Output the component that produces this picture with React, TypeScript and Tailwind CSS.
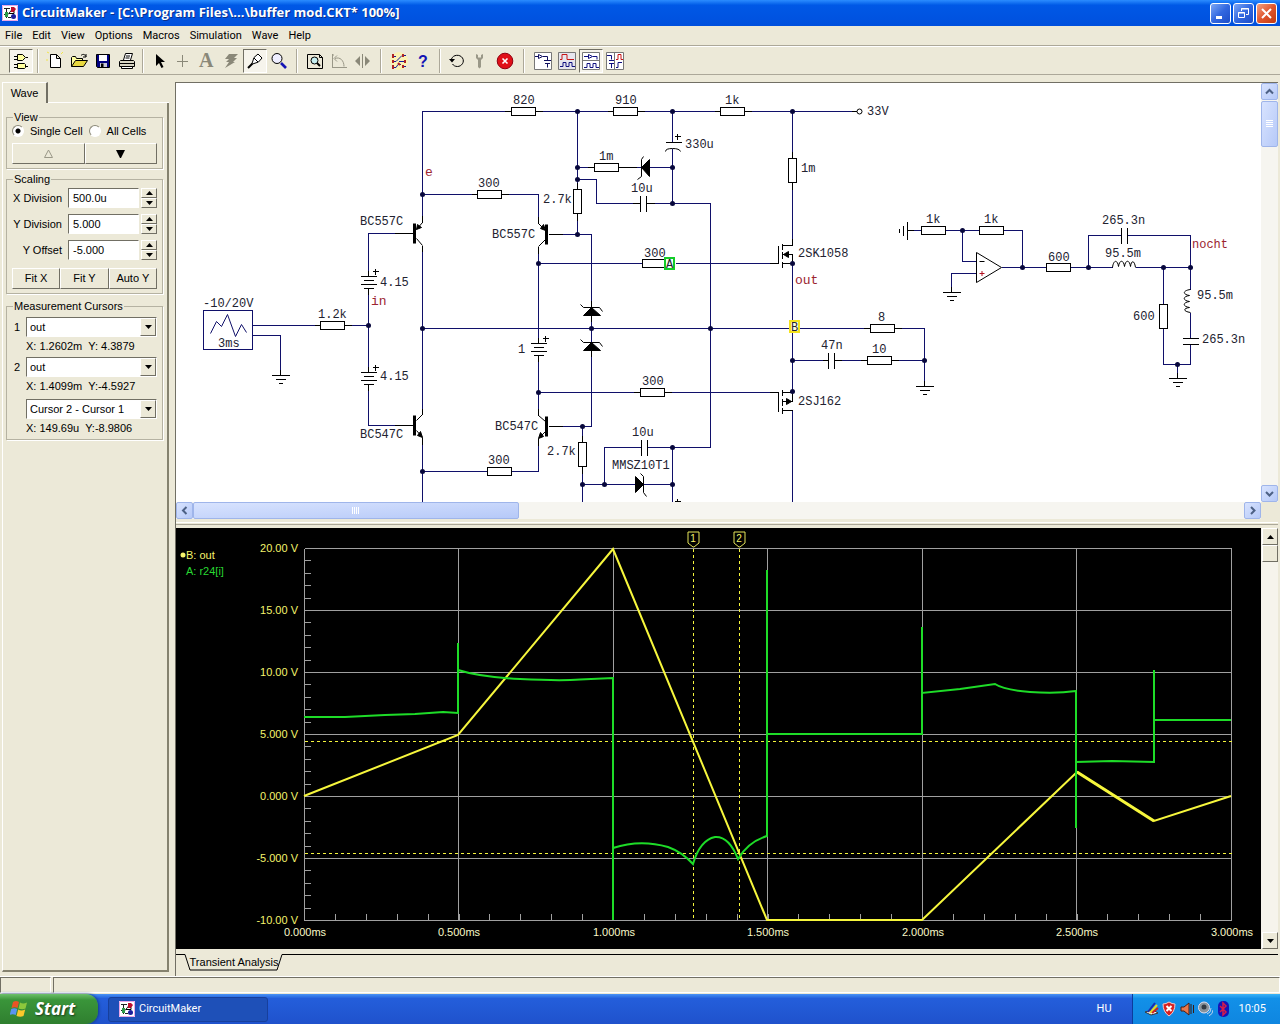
import React, { useState } from 'react';
import clsx from 'clsx';

const RAISED = 'border border-t-white border-l-white border-r-[#716f64] border-b-[#716f64] bg-[#ece9d8]';
const SUNKEN = 'border border-t-[#716f64] border-l-[#716f64] border-r-white border-b-white';

/* ---------- title bar ---------- */

const AppIcon = () => (
  <svg width="16" height="16" viewBox="0 0 16 16" className="shrink-0" aria-hidden="true">
    <rect width="16" height="16" fill="#fff" />
    <path d="M.5.5h15v15H.5z" fill="none" stroke="#e9a6e6" />
    <path d="M2 3.500h6M4.500 3v10M2 9.500h4l4-5M6 12.500h3" fill="none" stroke="#222" />
    <path d="M9 2h3l2 2-2 3H9z" fill="#c01030" />
    <path d="M3 7h3v5H3z" fill="#2c9c48" />
    <circle cx="11.500" cy="11.500" r="2.500" fill="#1b1f9c" />
    <path d="M7 8.500h5v-2" stroke="#000" fill="none" />
  </svg>
);

const WindowButton: React.FC<{ label: string; close?: boolean; children: React.ReactNode }> = ({ label, close, children }) => (
  <button
    aria-label={label}
    className={clsx(
      'flex h-[21px] w-[21px] items-center justify-center rounded-[3px] border border-white',
      close
        ? 'bg-linear-to-br from-[#f0a080] via-[#e0552d] to-[#c23a10]'
        : 'bg-linear-to-br from-[#7ea6f4] via-[#3268e0] to-[#1c4cc8]'
    )}
  >
    <svg width="15" height="15" viewBox="0 0 15 15" fill="none" stroke="#fff">{children}</svg>
  </button>
);

const TitleBar = () => (
  <header className="flex h-[26px] shrink-0 items-center bg-linear-to-b from-[#2b8cff] via-[#0058e6] via-20% to-[#0050dd] pr-[3px] pl-0.5">
    <AppIcon />
    <h1 className="ml-1 flex-1 truncate font-['Open_Sans','Noto_Sans',sans-serif] text-[13px] font-bold whitespace-pre text-white [text-shadow:1px_1px_#0a2f8c]">
      {'CircuitMaker - [C:\\Program Files\\...\\buffer mod.CKT* 100%]'}
    </h1>
    <div className="flex gap-0.5">
      <WindowButton label="Minimize"><path d="M3 11.500h6" strokeWidth="3" /></WindowButton>
      <WindowButton label="Restore">
        <path d="M5.500 5V2.500h7v6H10M5 3h8" />
        <path d="M2.500 6.500h6v5h-6zM2 7h7" />
      </WindowButton>
      <WindowButton label="Close" close><path d="M3 3l9 9M12 3l-9 9" strokeWidth="2" /></WindowButton>
    </div>
  </header>
);

const MENUS = ['File', 'Edit', 'View', 'Options', 'Macros', 'Simulation', 'Wave', 'Help'];

const MenuBar = () => (
  <nav className="flex h-5 shrink-0 items-center gap-2.5 border-b border-[#aca899] pl-[5px] font-[Roboto,sans-serif] text-[11px] text-black">
    {MENUS.map((m) => (
      <button key={m} className="leading-4">{m}</button>
    ))}
  </nav>
);

/* ---------- toolbar ---------- */

interface ToolProps {
  label: string;
  pressed?: boolean;
  children: React.ReactNode;
}

const Tool: React.FC<ToolProps> = ({ label, pressed, children }) => (
  <button
    aria-label={label}
    title={label}
    className={clsx('flex h-6 w-6 items-center justify-center', pressed && SUNKEN, pressed && 'bg-[#f6f4ec]')}
  >
    <svg width="20" height="20" viewBox="0 0 20 20" fill="none" stroke="#000" className="shrink-0 overflow-visible">{children}</svg>
  </button>
);

const Divider: React.FC<{ className?: string }> = ({ className = 'mx-1' }) => (
  <div className={clsx('h-6 w-0.5 border-r border-l border-r-white border-l-[#aca899]', className)} />
);

const Toolbar = () => (
  <div className="flex h-[29px] shrink-0 items-center border-t border-b border-t-white border-b-[#aca899] pl-[9px]">
    <Tool label="Parts" pressed>
      <path d="M6.500 3.500h5l3 3-3 3h-5zM3 5.500h3M3 8.500h3M15 6.500h2" fill="#ffffa0" />
      <path d="M6.500 12.500h7l1 1v3l-1 1h-7zM3 13.500h3M3 16.500h3M15 15.500h2" fill="#ffffa0" />
    </Tool>
    <Divider />
    <Tool label="New"><path d="M5.500 3.500h6l4 4v9h-10zM11.500 3.500v4h4" fill="#fff" /><path d="M4 2l-2-1M16 3l2-2M3 9H1" stroke="#f2e64a" /></Tool>
    <Tool label="Open">
      <path d="M2.500 15.500v-9l1-1h3l1 2h6v2" fill="#ffffa0" />
      <path d="M2.500 15.500l4-6h12l-4 6z" fill="#e8d840" />
      <path d="M12 4.500c2-2 4-1 5 1M17 3v3h-3" />
    </Tool>
    <Tool label="Save">
      <path d="M3.500 3.500h13v13h-12l-1-1z" fill="#000080" />
      <path d="M6 4h8v6H6z" fill="#fff" stroke="none" />
      <path d="M7 12h7v4H7z" fill="#c8c8d8" stroke="none" />
      <path d="M8 12.500h2.500V16H8z" fill="#000" stroke="none" />
    </Tool>
    <Tool label="Print">
      <path d="M6.500 9l2-6.500h7l-2 6.500" fill="#fff" />
      <path d="M9 5h4M8.500 7h4" />
      <path d="M3.500 9.500h13l1 1v5h-15v-5zM3 12.500h14" fill="#d8d5c4" />
      <path d="M4.500 15.500h11v2h-11z" fill="#fff" />
    </Tool>
    <Divider className="mx-[3px]" />
    <Tool label="Select"><path d="M7 3v12l3-3 2.500 5 2-1-2.500-5h4z" fill="#000" stroke="none" /></Tool>
    <Tool label="Wire"><path d="M9.500 4v12M4 10.500h11" stroke="#8a8878" /></Tool>
    <Tool label="Text">
      <text x="2" y="16" fill="#8a8878" stroke="none" fontFamily="Liberation Serif, serif" fontSize="20" fontWeight="bold">A</text>
    </Tool>
    <Tool label="Delete"><path d="M8 3h9l-4 4h3l-4 4h2L4 17l4-6H5l3-3H4z" fill="#8a8878" stroke="none" /></Tool>
    <Tool label="Probe" pressed>
      <path d="M7 12.500l2-6 4-3.500 4 4-3.500 4-6 2z" fill="#fff" />
      <path d="M3 17l4.500-4.500" strokeWidth="2" />
      <path d="M9 7l4 4" />
    </Tool>
    <Tool label="Zoom">
      <circle cx="8" cy="7.500" r="5" fill="#eef" />
      <path d="M12 12l5 5" stroke="#1414b4" strokeWidth="2.600" />
    </Tool>
    <Divider className="mx-[5px]" />
    <Tool label="Fit">
      <path d="M2.500 3.500h12l3 3v11h-15zM14.500 3.500v3h3" />
      <circle cx="9.500" cy="9.500" r="3.500" fill="#c6eef0" />
      <path d="M12 12l3 3" strokeWidth="2" />
    </Tool>
    <Tool label="Rotate">
      <path d="M3.500 3v13.500H18M6 7.500c5-2 9 2 9 8M8 4.500l-3 3 3 3" stroke="#9a9888" />
      <path d="M3 4h3M3 16.500h14" stroke="#9a9888" strokeDasharray="2 1" />
    </Tool>
    <Tool label="Mirror">
      <path d="M9.500 3v14" stroke="#8a8878" />
      <path d="M7 5v10l-5-5zM12 5v10l5-5z" fill="#8a8878" stroke="none" />
    </Tool>
    <Divider className="mx-[5px]" />
    <Tool label="Trace">
      <circle cx="10" cy="10" r="9" fill="#fbf3b4" stroke="none" />
      <path d="M3 5.500h4M3 10.500h4l6-6h4M3 16.500h4l2-3h3M10 10.500h7M13 15.500h4" stroke="#1c1c9c" />
      <path d="M4 3v4M4 9v3M4 14v4M14 3v3M16 9v3M14 14v3M9 12l2 2" stroke="#b02424" strokeWidth="2" />
    </Tool>
    <Tool label="Help">
      <text x="5" y="16" fill="#1414b4" stroke="none" fontFamily="Liberation Sans, sans-serif" fontSize="16" fontWeight="bold">?</text>
    </Tool>
    <Divider />
    <Tool label="Reset">
      <path d="M4.500 8C6 3.500 13 3 15.500 7s-1 8.500-5 8.500c-2.500 0-4-1-5-2.500" />
      <path d="M2 8h6l-3 3.500z" fill="#000" stroke="none" />
    </Tool>
    <Tool label="Step">
      <path d="M5 3v4l2 2v7l1.500 1.500L10 16V9l2-2V3l-2 1v2.500H7V4z" fill="#9a9888" stroke="none" />
    </Tool>
    <Tool label="Stop">
      <circle cx="10" cy="10" r="7.800" fill="#e01018" stroke="#900010" />
      <path d="M7.500 7.500l5 5M12.500 7.500l-5 5" stroke="#fff" strokeWidth="1.600" />
    </Tool>
    <Divider className="mx-1.5" />
    <Tool label="Schematic view">
      <path d="M1.500 1.500h17v17h-17z" fill="#fff" stroke="#777" />
      <path d="M2 5.500h3M5.500 3.500v4l4-2zM10 5.500h4.500v4M11 9.500h7M12 12.500h5M14.500 12.500v4" stroke="#101060" />
    </Tool>
    <Tool label="Wave view">
      <path d="M1.500 1.500h17v17h-17z" fill="#e6e6ee" stroke="#777" />
      <path d="M3 8.500h2v-5h5v5h7" stroke="#c81414" />
      <path d="M3 15.500h3v-4h3v4h3v-4h3v4h3" stroke="#101080" />
    </Tool>
    <Tool label="Split view" pressed>
      <path d="M1.500 1.500h17v17h-17zM2 9.500h16" fill="#fff" stroke="#777" />
      <path d="M3 5.500h4M7.500 3.500v4l4-2zM12 5.500h4v3M3 16.500h3v-4h3v4h3v-4h3v4h3" stroke="#101080" />
    </Tool>
    <Tool label="Side view">
      <path d="M1.500 1.500h17v17h-17zM9.500 2v16" fill="#fff" stroke="#777" />
      <path d="M2 4.500h4.500v4M4 9.500h5M4 12.500h5M6.500 13v4M11 16.500h2v-5h4" stroke="#101080" />
      <path d="M11 8.500h2v-5h3v5h2" stroke="#c81414" />
    </Tool>
  </div>
);

/* ---------- side panel ---------- */

const Triangle: React.FC<{ up?: boolean; className?: string }> = ({ up, className }) => (
  <svg width="7" height="4" viewBox="0 0 7 4" className={className} aria-hidden="true">
    <path d={up ? 'M0 4h7L3.500 0z' : 'M0 0h7L3.500 4z'} fill="#000" />
  </svg>
);

const Group: React.FC<{ title: string; className?: string; children: React.ReactNode }> = ({ title, className, children }) => (
  <fieldset className={clsx('rounded-none border border-[#b5b2a2] px-[5px] shadow-[1px_1px_white]', className)}>
    <legend className="ml-px px-px leading-3">{title}</legend>
    {children}
  </fieldset>
);

const PushButton: React.FC<{ label?: string; children: React.ReactNode }> = ({ label, children }) => (
  <button aria-label={label} className={clsx('flex h-[21px] flex-1 items-center justify-center', RAISED)}>{children}</button>
);

const SpinField: React.FC<{ id: string; label: string; value: string }> = ({ id, label, value }) => (
  <div className="flex h-5 items-center">
    <label htmlFor={id} className="flex-1 pr-1.5 text-right">{label}</label>
    <input id={id} defaultValue={value} className={clsx('h-5 w-[71px] bg-white pl-1 outline-none', SUNKEN)} />
    <div className="ml-0.5 flex w-4 flex-col">
      <button aria-label={`${label} up`} className={clsx('flex h-2.5 items-center justify-center', RAISED)}><Triangle up /></button>
      <button aria-label={`${label} down`} className={clsx('flex h-2.5 items-center justify-center', RAISED)}><Triangle /></button>
    </div>
  </div>
);

const Combo: React.FC<{ id: string; label?: string; value: string }> = ({ id, label, value }) => (
  <div className="flex h-5 items-center">
    <label htmlFor={id} className="w-3.5 pl-0.5">{label}</label>
    <div className="relative flex-1">
      <select
        id={id}
        aria-label={label ? undefined : 'Difference'}
        defaultValue={value}
        className={clsx('block h-5 w-full appearance-none bg-white pl-[3px]', SUNKEN)}
      >
        <option>{value}</option>
      </select>
      <span className={clsx('pointer-events-none absolute top-px right-px flex h-[18px] w-4 items-center justify-center', RAISED)}>
        <Triangle />
      </span>
    </div>
  </div>
);

const Readout: React.FC<{ children: React.ReactNode }> = ({ children }) => (
  <p className="pl-3.5 leading-[18px] whitespace-pre">{children}</p>
);

const SidePanel = () => {
  const [cells, setCells] = useState('single');
  const radio = 'h-3 w-3 appearance-none rounded-full border border-[#8a8878] border-r-white border-b-white bg-white checked:bg-[radial-gradient(circle,#000_2px,#fff_3px)]';
  return (
    <aside className="flex w-[169px] shrink-0 flex-col pb-1 pl-0.5 font-['Liberation_Sans',Arial,sans-serif] text-[11px] text-black">
      <div className="flex h-[21px]">
        <button className="w-[46px] border-t border-r-2 border-l border-t-white border-r-[#716f64] border-l-white">Wave</button>
        <div className="flex-1 border-b border-white" />
      </div>
      <div className="flex-1 border-r-2 border-b-2 border-l border-r-[#85826f] border-b-[#85826f] border-l-white pt-2 pr-1 pl-[3px]">
        <Group title="View" className="pb-1">
          <div className="flex h-5 items-center gap-1.5 pb-1">
            <input id="single" type="radio" name="cells" className={radio} checked={cells === 'single'} onChange={() => setCells('single')} />
            <label htmlFor="single">Single Cell</label>
            <input id="all" type="radio" name="cells" className={radio} checked={cells === 'all'} onChange={() => setCells('all')} />
            <label htmlFor="all" className="whitespace-nowrap">All Cells</label>
          </div>
          <div className="flex">
            <PushButton label="Previous cell">
              <svg width="11" height="9" viewBox="0 0 11 9"><path d="M5.500 1l4 7.500h-8z" fill="none" stroke="#9a9888" /></svg>
            </PushButton>
            <PushButton label="Next cell">
              <svg width="9" height="8" viewBox="0 0 9 8"><path d="M0 0h9L5 8H4z" /></svg>
            </PushButton>
          </div>
        </Group>
        <Group title="Scaling" className="mt-1 pt-[3px] pb-1">
          <div className="flex flex-col gap-1.5">
            <SpinField id="xdiv" label="X Division" value="500.0u" />
            <SpinField id="ydiv" label="Y Division" value="5.000" />
            <SpinField id="yoff" label="Y Offset" value="-5.000" />
          </div>
          <div className="mt-2 flex">
            <PushButton>Fit X</PushButton>
            <PushButton>Fit Y</PushButton>
            <PushButton>Auto Y</PushButton>
          </div>
        </Group>
        <Group title="Measurement Cursors" className="mt-1.5 pt-[5px] pb-0.5">
          <Combo id="cur1" label="1" value="out" />
          <Readout>X: 1.2602m  Y: 4.3879</Readout>
          <div className="h-0.5" />
          <Combo id="cur2" label="2" value="out" />
          <Readout>X: 1.4099m  Y:-4.5927</Readout>
          <div className="h-1" />
          <Combo id="curDiff" value="Cursor 2 - Cursor 1" />
          <Readout>X: 149.69u  Y:-8.9806</Readout>
        </Group>
      </div>
    </aside>
  );
};

/* ---------- schematic ---------- */

type Pt = [number, number];

const WIRES = [
  'M422 222V111H511M535 111H613M637 111H720M744 111H852',
  'M577 111V189M577 213V234M577 167H594M618 167H640M649 167H672M672 111V142M672 148V203',
  'M577 179H596V203H640M646 203H710V447H646M641 447H604V484',
  'M792 111V158M792 182V245M792 263V391M792 410V502',
  'M422 194H477M501 194H538V223M538 246V343M538 355V415M538 438V471H511M487 471H422',
  'M422 245V414M422 437V502M414 233H368V276M368 288V372M368 384V425H414',
  'M548 234H591V307M591 315V342M591 350V426H548M582 426V442M582 466V502M582 484H635M643 484H672M672 447V502',
  'M538 263H642M675 263H778M538 392H640M664 392H778M422 328H870M894 328H924V386',
  'M792 360H828M834 360H867M891 360H924',
  'M252 325H320M344 325H368M252 335H280V375',
  'M907 230H921M945 230H979M1003 230H1022V267M962 230V261H976M976 273H951V292M1001 267H1046M1070 267H1112',
  'M1088 267V235H1121M1126 235H1190V289M1135 267H1190M1163 267V304M1163 328V364H1190V344M1190 312V338M1177 364V378',
];

const DOTS: Pt[] = [
  [577, 111], [672, 111], [792, 111], [577, 167], [672, 167], [577, 179], [672, 203], [577, 234], [422, 194],
  [538, 263], [792, 263], [368, 325], [422, 328], [591, 328], [710, 328], [792, 360], [924, 360], [792, 391],
  [538, 392], [582, 426], [672, 447], [422, 471], [582, 484], [604, 484], [672, 484],
  [962, 230], [1022, 267], [1088, 267], [1163, 267], [1190, 267], [1177, 364],
];

const RES_H: Pt[] = [
  [511, 111], [613, 111], [720, 111], [594, 167], [477, 194], [642, 263], [320, 325], [870, 328], [867, 360],
  [640, 392], [487, 471], [921, 230], [979, 230], [1046, 267],
];
const RES_V: Pt[] = [[577, 189], [792, 158], [582, 442], [1163, 304]];
const BATTERIES: Pt[] = [[368, 276], [368, 372], [538, 343]];
const GROUNDS: Pt[] = [[280, 375], [924, 386], [951, 292], [1177, 378]];

// black leads where a part meets its wire
const LEADS =
  'M504 111H511M535 111H542M607 111H613M637 111H644M714 111H720M744 111H751M851 111H856M587 167H594M618 167H636' +
  'M471 194H477M501 194H508M394 233H414M394 425H414M548 234H562M548 426H562M769 263H778M769 392H778' +
  'M863 328H870M894 328H901M822 360H828M834 360H841M860 360H867M891 360H898M632 203H640M646 203H654' +
  'M633 392H640M664 392H671M314 325H320M344 325H351M792 151V158M792 182V189M792 238V245M577 182V189M577 213V220' +
  'M582 435V442M582 466V473M538 216V223M538 246V253M538 408V415M538 438V445M422 215V222M422 245V251M422 408V414M422 437V444' +
  'M368 270V276M368 288V294M368 366V372M368 384V390M538 337V343M538 355V361M591 300V307M591 315V321M591 350V356';

const LABELS: [number, number, string][] = [
  [513, 104, '820'], [615, 104, '910'], [725, 104, '1k'], [867, 115, '33V'], [685, 148, '330u'], [599, 160, '1m'],
  [631, 192, '10u'], [543, 203, '2.7k'], [801, 172, '1m'], [478, 187, '300'], [360, 225, 'BC557C'], [492, 238, 'BC557C'],
  [644, 257, '300'], [798, 257, '2SK1058'], [380, 286, '4.15'], [380, 380, '4.15'], [203, 307, '-10/20V'],
  [318, 318, '1.2k'], [218, 347, '3ms'], [518, 353, '1'], [878, 321, '8'], [821, 349, '47n'], [872, 353, '10'],
  [798, 405, '2SJ162'], [642, 385, '300'], [360, 438, 'BC547C'], [495, 430, 'BC547C'], [632, 436, '10u'],
  [547, 455, '2.7k'], [612, 469, 'MMSZ10T1'], [488, 464, '300'], [926, 223, '1k'], [984, 223, '1k'],
  [1048, 261, '600'], [1105, 257, '95.5m'], [1102, 224, '265.3n'], [1133, 320, '600'], [1197, 299, '95.5m'], [1202, 343, '265.3n'],
];

const PLUSES: Pt[] = [[374, 271], [374, 367], [544, 338], [676, 136], [676, 501]];

const Schematic = () => (
  <svg width="1085" height="419" viewBox="176 83 1085 419" role="img" aria-label="buffer mod.CKT" className="block max-w-none">
    <g transform="translate(.5 .5)" fill="none" stroke="#000" shapeRendering="crispEdges">
      {WIRES.map((d) => <path key={d} d={d} stroke="#10106a" />)}
      <path d={LEADS} />
      {RES_H.map(([x, y]) => <rect key={`${x}-${y}`} x={x} y={y - 4} width="24" height="8" fill="#fff" />)}
      {RES_V.map(([x, y]) => <rect key={`${x}-${y}`} x={x - 4} y={y} width="8" height="24" fill="#fff" />)}
      {BATTERIES.map(([x, y]) => (
        <path key={`${x}-${y}`} d={`M${x - 8} ${y}h16M${x - 5} ${y + 4}h10M${x - 8} ${y + 8}h16M${x - 5} ${y + 12}h10`} />
      ))}
      {GROUNDS.map(([x, y]) => (
        <path key={`${x}-${y}`} d={`M${x} ${y - 6}v6M${x - 9} ${y}h18M${x - 5} ${y + 4}h10M${x - 2} ${y + 8}h4`} />
      ))}
      <path d="M907 221v18M903 225v10M899 228v4M907 230h6" />
      {PLUSES.map(([x, y]) => <path key={`${x}-${y}`} d={`M${x - 2} ${y}h6M${x + 1} ${y - 3}v6`} />)}

      {/* capacitors */}
      <path d="M640 195v16M646 195v16M641 439v16M647 439v16M828 352v16M834 352v16M1121 227v16M1127 227v16M1182 338h16M1182 344h16M665 142h16" />

      {/* signal source */}
      <rect x="203" y="310" width="49" height="39" fill="#fff" stroke="#10106a" />

      {/* mosfets */}
      <path d="M778 245v18M782 243v6M782 251v7M782 261v6M782 245h10M782 254h10v9M782 263h10" />
      <path d="M778 392v19M782 389v6M782 398v7M782 407v6M782 392h10M792 391v10h-10M782 410h10" />
    </g>

    <g transform="translate(.5 .5)" fill="none" stroke="#000">
      <path d="M210 333l6-12 5 5 6-12 8 22 6-12 5 8" stroke="#10106a" />
      <path d="M665 151q0-3 7-3t8 3" />
      <path d="M643 156l-2 3v17l-4 3M580 304l3 3h16l3 4M580 339l3 3h16l3 4M640 473l3 3v16l3 4" />
      <path d="M641 167l8-8v17zM591 307l9 8h-17zM591 342l9 8h-17zM643 484l-8-8v16z" fill="#000" />
      <path d="M783 254l5-3v6zM791 401l-5-3v6z" fill="#000" />
      <path d="M414 223v20M414 415v20M546 224v20M546 416v20" strokeWidth="3" />
      <path d="M416 229l6-7M416 238l6 7M416 420l6-6M416 430l6 7M545 230l-7-7M545 239l-7 7M545 421l-7-6M545 431l-7 7" />
      <path d="M416 229l1-5 4 3zM422 437l-5-2 3-4zM545 230l-5-2 3-4zM538 438l2-6 3 4z" fill="#000" />
      <circle cx="859" cy="111" r="2.500" fill="#fff" />
      <path d="M976 252v30l25-15z" fill="#fff" />
      <path d="M979 261h5" />
      <path d="M979 273h5M981.500 270.500v5" stroke="#b01020" />
      <path d="M1112 267c1-8 5-8 6-1 1-7 5-7 6 0 1-7 5-7 6 0 1-7 4-6 5 1" />
      <path d="M1190 289c-8 1-8 5-1 6-7 1-7 5 0 6-7 1-7 5 0 6-7 1-6 4 1 5" />
      {DOTS.map(([x, y]) => <circle key={`${x}-${y}`} cx={x} cy={y} r="2.500" fill="#08083c" stroke="none" />)}
    </g>

    <g fontFamily="Liberation Mono, Courier New, monospace" fontSize="12" fill="#222230">
      {LABELS.map(([x, y, s]) => <text key={`${x}-${y}`} x={x} y={y}>{s}</text>)}
      <g fill="#9c2430">
        <text x="1192" y="248">nocht</text>
        <text x="425" y="176" fontSize="13">e</text>
        <text x="371" y="305" fontSize="13">in</text>
        <text x="795" y="284" fontSize="13">out</text>
      </g>
      <rect x="665" y="258" width="9" height="11" fill="#f2fff2" stroke="#14cc28" strokeWidth="2" />
      <text x="666" y="268">A</text>
      <rect x="790" y="321" width="9" height="11" fill="#fffde0" stroke="#f4e21c" strokeWidth="2" />
      <text x="791" y="331">B</text>
    </g>
  </svg>
);

/* ---------- waveform plot ---------- */

const GRID_X = [304, 458, 613, 767, 922, 1076, 1231];
const GRID_Y = [548, 610, 672, 734, 796, 858, 920];
const VOLTS = ['20.00 V', '15.00 V', '10.00 V', '5.000 V', '0.000 V', '-5.000 V', '-10.00 V'];
const TIMES = ['0.000ms', '0.500ms', '1.000ms', '1.500ms', '2.000ms', '2.500ms', '3.000ms'];
const CURSORS = [{ x: 693, n: '1' }, { x: 739, n: '2' }];

const TRACE_B = 'M304 796L458 735 613 549 767 920H922L1077 772 1154 821 1231 796';
const TRACE_A =
  'M304 717H345L385 715 415 714 443 712 458 713V643V670Q480 677 520 679T580 679.500L613 678V920V848' +
  'Q640 839 668 847 682 852 693 864 700 840 715 837 729 836 738 859 748 842 767 836V570V734H922V627V693' +
  'L960 689 995 684Q1004 690 1030 692T1076 691V828V762L1112 761 1154 762V670V720H1231';

const Plot = () => (
  <svg viewBox="176 528 1085 421" preserveAspectRatio="xMinYMin meet" role="img" aria-label="Transient analysis" className="block h-full w-full bg-black">
    <g transform="translate(.5 .5)" fill="none" stroke="#a0a0a0" shapeRendering="crispEdges">
      {GRID_X.map((x) => <path key={x} d={`M${x} 548V920`} />)}
      {GRID_Y.map((y) => <path key={y} d={`M304 ${y}H1231`} />)}
      {Array.from({ length: 30 }, (_, i) => <path key={i} d={`M304 ${Math.round(548 + i * 12.4)}h6`} />)}
      {Array.from({ length: 30 }, (_, i) => <path key={i} d={`M${Math.round(304 + i * 30.9)} 920v-7`} />)}
      <g stroke="#f4f43c" strokeDasharray="3 3">
        <path d="M304 741H1231M304 853H1231" />
        {CURSORS.map((c) => <path key={c.n} d={`M${c.x} 548V920`} />)}
      </g>
    </g>
    <path d={TRACE_B} fill="none" stroke="#f6f63c" strokeWidth="2" />
    <path d="M1077 772L1154 821" stroke="#f6f63c" strokeWidth="3" />
    <path d={TRACE_A} fill="none" stroke="#1edc28" strokeWidth="2" />
    <g fontFamily="Liberation Sans, Arial, sans-serif" fontSize="11" fill="#f4f46c">
      <circle cx="183" cy="555" r="2.500" />
      <text x="186" y="559">B: out</text>
      <text x="186" y="575" fill="#28d832">A: r24[i]</text>
      {VOLTS.map((v, i) => <text key={v} x="298" y={GRID_Y[i] + 4} textAnchor="end">{v}</text>)}
      {TIMES.map((t, i) => <text key={t} x={GRID_X[i] + 1} y="936" textAnchor="middle" fill="#f8f8c8">{t}</text>)}
      {CURSORS.map((c) => (
        <g key={c.n}>
          <path d={`M${c.x - 5} 532h11v11l-5 4h-1l-5-4z`} fill="none" stroke="#e6e65a" />
          <text x={c.x} y="542" textAnchor="middle" fontSize="10">{c.n}</text>
        </g>
      ))}
    </g>
  </svg>
);

/* ---------- scroll bars ---------- */

const XP_PART = 'flex items-center justify-center rounded-[2px] border border-[#9fb5ea] bg-linear-to-br from-[#d8e3fe] to-[#b6c9f8]';

const XpArrow: React.FC<{ dir: 'up' | 'down' | 'left' | 'right' }> = ({ dir }) => {
  const d = {
    up: 'M1 6.500l3.500-3.500L8 6.500',
    down: 'M1 3l3.500 3.500L8 3',
    left: 'M6.500 1L3 4.500 6.500 8',
    right: 'M3 1l3.500 3.500L3 8',
  }[dir];
  return (
    <button aria-label={`Scroll ${dir}`} className={clsx('h-[17px] w-[17px] shrink-0', XP_PART)}>
      <svg width="9" height="9" viewBox="0 0 9 9"><path d={d} fill="none" stroke="#4d6185" strokeWidth="2" /></svg>
    </button>
  );
};

const SchematicPane = () => (
  <section className="flex h-[437px] shrink-0 flex-col border-t border-[#716f64] bg-white">
    <div className="flex min-h-0 flex-1">
      <div className="min-w-0 flex-1 overflow-hidden"><Schematic /></div>
      <div className="flex w-[17px] flex-col bg-[#f6f5f0]">
        <XpArrow dir="up" />
        <div className={clsx('mt-px h-[46px]', XP_PART)}>
          <svg width="7" height="8" viewBox="0 0 7 8"><path d="M0 .5h7M0 2.500h7M0 4.500h7M0 6.500h7" stroke="#fff" /></svg>
        </div>
        <div className="flex-1" />
        <XpArrow dir="down" />
      </div>
    </div>
    <div className="flex h-[17px]">
      <div className="flex min-w-0 flex-1 bg-[#f6f5f0]">
        <XpArrow dir="left" />
        <div className={clsx('w-[30%]', XP_PART)}>
          <svg width="8" height="7" viewBox="0 0 8 7"><path d="M.5 0v7M2.500 0v7M4.500 0v7M6.500 0v7" stroke="#fff" /></svg>
        </div>
        <div className="flex-1" />
        <XpArrow dir="right" />
      </div>
      <div className="w-[17px] bg-[#ece9d8]" />
    </div>
  </section>
);

const ClassicPart: React.FC<{ label: string; children?: React.ReactNode }> = ({ label, children }) => (
  <button aria-label={label} className={clsx('flex h-[17px] w-4 items-center justify-center', RAISED)}>{children}</button>
);

const PlotPane = () => (
  <section className="flex min-h-0 flex-1 bg-black">
    <div className="min-h-0 min-w-0 flex-1"><Plot /></div>
    <div className="flex w-[17px] flex-col bg-[#f6f4ec] pl-px">
      <ClassicPart label="Scroll plot up"><Triangle up /></ClassicPart>
      <ClassicPart label="Plot scroll position" />
      <div className="flex-1" />
      <ClassicPart label="Scroll plot down"><Triangle /></ClassicPart>
    </div>
  </section>
);

const AnalysisTabs = () => (
  <div className="flex h-[23px] shrink-0 pt-[5px] font-['Liberation_Sans',Arial,sans-serif] text-[11px] text-black">
    <div className="w-2 border-t border-black" />
    <button className="relative h-[17px] w-[100px] text-center leading-[17px]">
      <svg className="absolute inset-0" width="100" height="17" viewBox="0 0 100 17" fill="none" stroke="#000">
        <path d="M0 .5h1l5 15.500h87L98 .5h2" />
      </svg>
      Transient Analysis
    </button>
    <div className="flex-1 border-t border-black" />
  </div>
);

/* ---------- task bar ---------- */

const TrayIcon: React.FC<{ children: React.ReactNode }> = ({ children }) => (
  <svg width="16" height="16" viewBox="0 0 16 16" aria-hidden="true">{children}</svg>
);

const Taskbar = () => (
  <footer className="flex h-[30px] shrink-0 items-center bg-linear-to-b from-[#4a93f5] via-[#245edb] via-15% to-[#1f52cc] font-[Roboto,sans-serif] text-[11px] text-white">
    <button className="flex h-full w-[98px] items-center gap-1.5 rounded-r-xl bg-linear-to-b from-[#6cc06a] via-[#3a953a] via-20% to-[#2f7f2f] pl-2.5 shadow-[1px_0_3px_#143a8c]">
      <svg width="19" height="18" viewBox="0 0 19 18" aria-hidden="true">
        <path d="M3 2q3-2 6 0L7.500 8Q5 6.500 1.500 8z" fill="#ea5426" />
        <path d="M10 2.500q3 2 7 0L15.500 8.500q-3 1.500-7 0z" fill="#8cc83c" />
        <path d="M1.200 9q3-1.500 6 0L5.700 15q-3-1.500-6 0z" fill="#5a94f0" />
        <path d="M8.200 9.500q3 2 7 0L13.500 16q-3 1.500-7 0z" fill="#fbc82c" />
      </svg>
      <span className="font-['Open_Sans','Noto_Sans',sans-serif] text-[17px] leading-5 font-bold italic [text-shadow:1px_1px_2px_#1c3c1c]">Start</span>
    </button>
    <button className="ml-2.5 flex h-[25px] w-40 items-center gap-1 rounded-[3px] border border-[#173f9c] bg-[#1e50b8] pl-2.5">
      <AppIcon />
      CircuitMaker
    </button>
    <div className="flex-1" />
    <span className="px-5">HU</span>
    <div className="flex h-full items-center gap-0.5 border-l border-[#0c3c9c] bg-linear-to-b from-[#38b4f8] via-[#1290e8] via-15% to-[#0f86e0] pr-3.5 pl-2.5">
      <TrayIcon>
        <path d="M2 11l6 3 7-2-5-3z" fill="#f4f4f4" stroke="#333" />
        <path d="M5 11L12 2" stroke="#1c2cb0" strokeWidth="2" />
        <path d="M7 12l7-8" stroke="#e8d820" strokeWidth="2" />
        <path d="M9 12l6-5" stroke="#d02020" strokeWidth="2" />
      </TrayIcon>
      <TrayIcon>
        <path d="M8 1q3 2 6 2 0 8-6 12-6-4-6-12 3 0 6-2z" fill="#d82020" stroke="#f4c8c8" />
        <path d="M5.500 5l5 5M10.500 5l-5 5" stroke="#fff" strokeWidth="2" />
      </TrayIcon>
      <TrayIcon>
        <path d="M2 6h3l5-4v12l-5-4H2z" fill="#e8784c" stroke="#4a1c10" />
        <path d="M12 3v10M14.500 4v8" stroke="#3a1c10" />
      </TrayIcon>
      <TrayIcon>
        <circle cx="7" cy="6.500" r="5.500" fill="#8a949c" stroke="#dde" />
        <circle cx="7" cy="6" r="2.500" fill="#333b44" />
        <path d="M10 13q4-1 4-6M12 15q4-2 4-6" fill="none" stroke="#b8d0ec" />
      </TrayIcon>
      <TrayIcon>
        <rect x="3" y="0" width="11" height="16" rx="5" fill="#1414b8" />
        <path d="M5 5l6 6-3 3V2l3 3-6 6" fill="none" stroke="#d81c48" strokeWidth="1.500" />
      </TrayIcon>
      <time className="ml-1.5">10:05</time>
    </div>
  </footer>
);

export default function App() {
  return (
    <div className="flex h-screen min-h-[700px] flex-col overflow-hidden bg-[#ece9d8]">
      <TitleBar />
      <MenuBar />
      <Toolbar />
      <div className="flex min-h-0 flex-1 pt-[7px]">
        <SidePanel />
        <main className="ml-1.5 flex min-w-0 flex-1 flex-col border-l border-[#716f64] pr-0.5">
          <SchematicPane />
          <div className="my-[3px] h-[3px] shrink-0 border-t border-b border-[#aca899] border-t-white" />
          <PlotPane />
          <AnalysisTabs />
          <div className="h-1 shrink-0" />
        </main>
      </div>
      <div className="flex h-[18px] shrink-0 border-t border-white">
        <div className={clsx('h-4 w-[51px]', SUNKEN)} />
        <div className={clsx('ml-0.5 h-4 flex-1', SUNKEN)} />
      </div>
      <Taskbar />
    </div>
  );
}
